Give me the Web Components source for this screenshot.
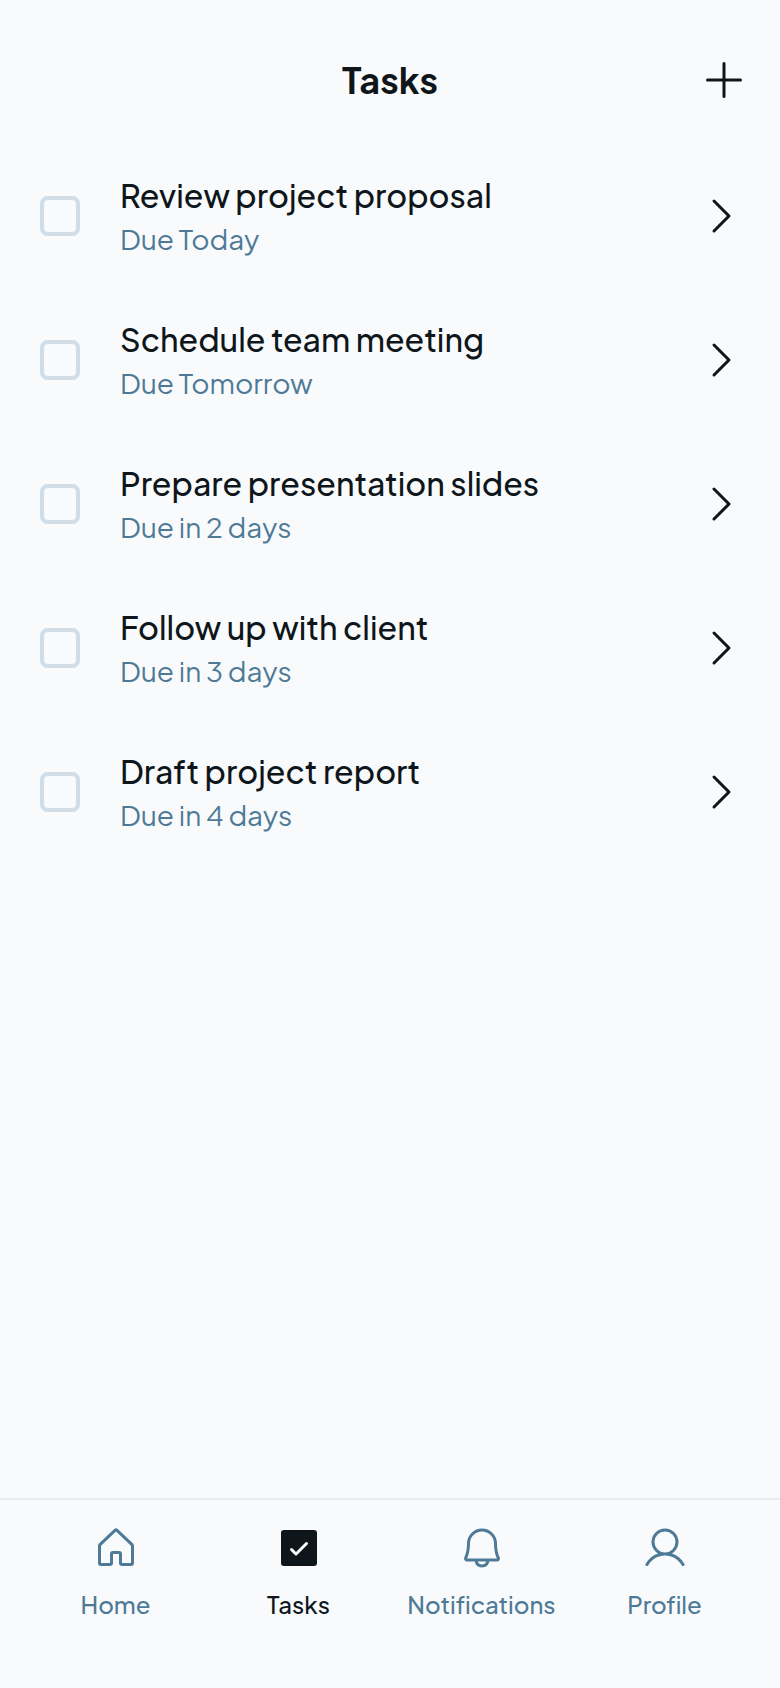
<!DOCTYPE html>
<html lang="en">
<head>
<meta charset="utf-8">
<meta name="viewport" content="width=device-width, initial-scale=1">
<title>Tasks</title>
<style>
  body {
    --ink: #0e161b;
    --accent: #4e7a97;
    --outline: #d0dde7;
    --rule: #e7eef3;
    --surface: #f8fafc;
    margin: 0;
    background: var(--surface);
    color: var(--ink);
    font-family: "Plus Jakarta Sans", Inter, "Noto Sans", sans-serif;
  }
</style>
</head>
<body>
<task-app>
  <app-header slot="header">Tasks</app-header>
  <task-item due="Due Today">Review project proposal</task-item>
  <task-item due="Due Tomorrow">Schedule team meeting</task-item>
  <task-item due="Due in 2 days">Prepare presentation slides</task-item>
  <task-item due="Due in 3 days">Follow up with client</task-item>
  <task-item due="Due in 4 days">Draft project report</task-item>
  <tab-bar slot="footer">
    <tab-link icon="house">Home</tab-link>
    <tab-link icon="check" active>Tasks</tab-link>
    <tab-link icon="bell">Notifications</tab-link>
    <tab-link icon="user">Profile</tab-link>
  </tab-bar>
</task-app>
<script>
  const icons = {
    plus: 'M224,128a8,8,0,0,1-8,8H136v80a8,8,0,0,1-16,0V136H40a8,8,0,0,1,0-16h80V40a8,8,0,0,1,16,0v80h80A8,8,0,0,1,224,128Z',
    caret: 'M181.66,133.66l-80,80a8,8,0,0,1-11.32-11.32L164.69,128,90.34,53.66a8,8,0,0,1,11.32-11.32l80,80A8,8,0,0,1,181.66,133.66Z',
    house: 'M218.83,103.77l-80-75.48a1.14,1.14,0,0,1-.11-.11,16,16,0,0,0-21.53,0l-.11.11L37.17,103.77A16,16,0,0,0,32,115.55V208a16,16,0,0,0,16,16H96a16,16,0,0,0,16-16V160h32v48a16,16,0,0,0,16,16h48a16,16,0,0,0,16-16V115.55A16,16,0,0,0,218.83,103.77ZM208,208H160V160a16,16,0,0,0-16-16H112a16,16,0,0,0-16,16v48H48V115.55l.11-.1L128,40l79.9,75.43.11.1Z',
    check: 'M208,32H48A16,16,0,0,0,32,48V208a16,16,0,0,0,16,16H208a16,16,0,0,0,16-16V48A16,16,0,0,0,208,32ZM173.66,109.66l-56,56a8,8,0,0,1-11.32,0l-24-24a8,8,0,0,1,11.32-11.32L112,148.69l50.34-50.35a8,8,0,0,1,11.32,11.32Z',
    bell: 'M221.8,175.94C216.25,166.38,208,139.33,208,104a80,80,0,1,0-160,0c0,35.34-8.26,62.38-13.81,71.94A16,16,0,0,0,48,200H88.81a40,40,0,0,0,78.38,0H208a16,16,0,0,0,13.8-24.06ZM128,216a24,24,0,0,1-22.62-16h45.24A24,24,0,0,1,128,216ZM48,184c7.7-13.24,16-43.92,16-80a64,64,0,1,1,128,0c0,36.05,8.28,66.73,16,80Z',
    user: 'M230.92,212c-15.23-26.33-38.7-45.21-66.09-54.16a72,72,0,1,0-73.66,0C63.78,166.78,40.31,185.66,25.08,212a8,8,0,1,0,13.85,8c18.84-32.56,52.14-52,89.07-52s70.23,19.44,89.07,52a8,8,0,1,0,13.85-8ZM72,96a56,56,0,1,1,56,56A56.06,56.06,0,0,1,72,96Z'
  };

  class Base extends HTMLElement {
    connectedCallback() {
      if (!this.shadowRoot) this.attachShadow({ mode: 'open' }).innerHTML = this.view();
    }
  }

  customElements.define('app-icon', class extends Base {
    view() {
      return `<style>
        :host { display: block; flex: none; width: 48px; height: 48px; }
        svg { display: block; width: 100%; height: 100%; fill: currentColor; }
      </style>
      <svg viewBox="0 0 256 256" aria-hidden="true"><path d="${icons[this.getAttribute('name')]}"/></svg>`;
    }
  });

  customElements.define('app-header', class extends Base {
    view() {
      return `<style>
        :host { display: grid; grid-template-columns: 48px 1fr 48px; align-items: center; height: 96px; padding: 32px 32px 16px; }
        h1 { grid-column: 2; margin: 0; text-align: center; font-size: 36px; line-height: 46px; font-weight: 700; }
        button { padding: 0; border: 0; background: none; color: inherit; }
      </style>
      <h1><slot></slot></h1>
      <button type="button" aria-label="Add task"><app-icon name="plus"></app-icon></button>`;
    }
  });

  customElements.define('task-item', class extends Base {
    view() {
      return `<style>
        :host { display: flex; align-items: center; gap: 32px; min-height: 144px; padding: 0 32px; }
        .box { display: grid; place-items: center; flex: none; width: 56px; }
        input { appearance: none; width: 40px; height: 40px; margin: 0; box-sizing: border-box; border: 4px solid var(--outline); border-radius: 8px; }
        label { flex: 1; min-width: 0; }
        .title, .due { display: block; }
        .title { font-size: 32px; line-height: 46px; font-weight: 500; }
        .due { font-size: 28px; line-height: 42px; color: var(--accent); }
        button { display: grid; place-items: center; flex: none; width: 56px; height: 56px; padding: 0; border: 0; background: none; color: inherit; }
      </style>
      <div class="box"><input type="checkbox" id="done"></div>
      <label for="done"><span class="title"><slot></slot></span><span class="due">${this.getAttribute('due')}</span></label>
      <button type="button" aria-label="Open task"><app-icon name="caret"></app-icon></button>`;
    }
  });

  customElements.define('tab-link', class extends Base {
    view() {
      const active = this.hasAttribute('active');
      return `<style>
        :host { display: block; flex: 1 1 0; min-width: 0; color: var(--accent); }
        :host([active]) { color: var(--ink); }
        a { display: flex; flex-direction: column; align-items: center; gap: 8px; color: inherit; text-decoration: none; font-size: 24px; line-height: 32px; font-weight: 500; font-variant-ligatures: none; }
        .icon { display: grid; place-items: center; height: 64px; }
      </style>
      <a href="#"${active ? ' aria-current="page"' : ''}><span class="icon"><app-icon name="${this.getAttribute('icon')}"></app-icon></span><span><slot></slot></span></a>`;
    }
  });

  customElements.define('tab-bar', class extends Base {
    view() {
      return `<style>
        :host { display: block; border-top: 2px solid var(--rule); padding: 16px 32px 68px; }
        nav { display: flex; gap: 16px; }
      </style>
      <nav aria-label="Main"><slot></slot></nav>`;
    }
  });

  customElements.define('task-app', class extends Base {
    view() {
      return `<style>
        :host { display: flex; flex-direction: column; min-height: 100vh; }
        main { flex: 1; }
      </style>
      <slot name="header"></slot>
      <main><slot></slot></main>
      <slot name="footer"></slot>`;
    }
  });
</script>
</body>
</html>
